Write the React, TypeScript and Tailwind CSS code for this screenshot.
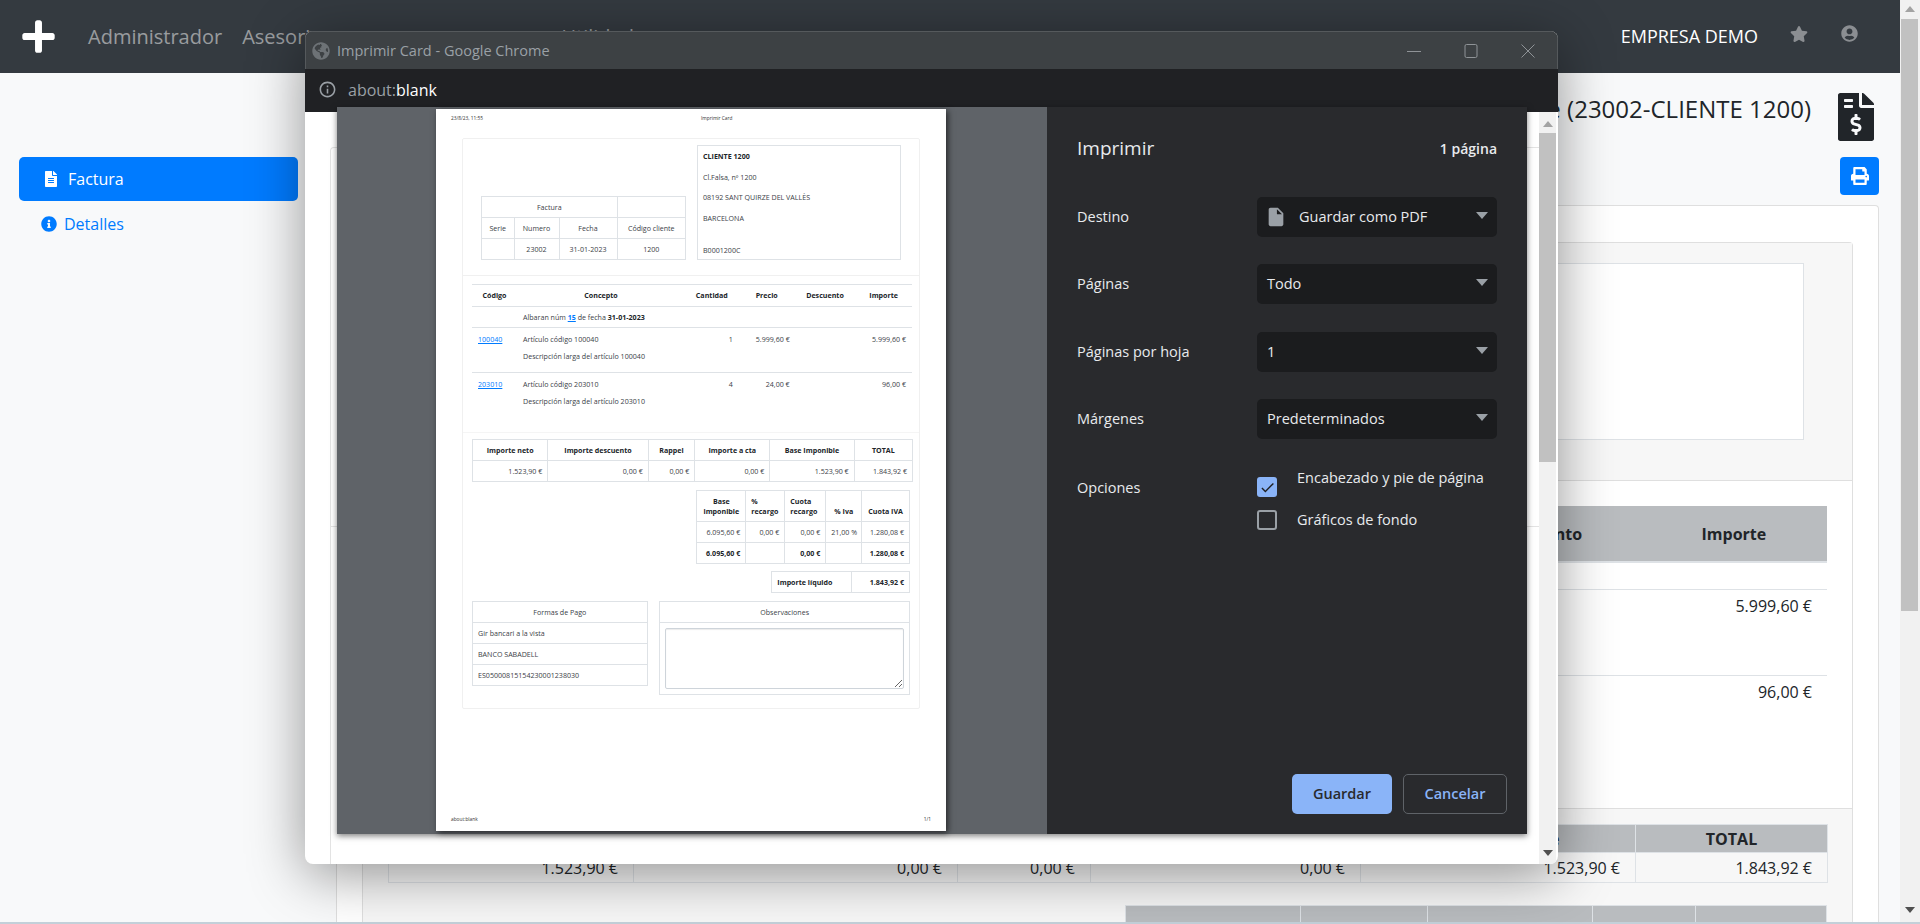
import React from 'react';
import {
  FaPlus,
  FaStar,
  FaUserCircle,
  FaFileAlt,
  FaInfoCircle,
  FaFileInvoiceDollar,
  FaPrint,
  FaGlobeAmericas,
} from 'react-icons/fa';
import { MdInfoOutline, MdInsertDriveFile, MdCheck } from 'react-icons/md';

const Caret = () => (
  <span className="ml-auto mr-[9px] mb-[3px] h-0 w-0 border-x-[6.5px] border-t-[7px] border-x-transparent border-t-[#9aa0a6]" />
);

const Field = ({ label, value, icon }: { label: string; value: string; icon?: boolean }) => (
  <div className="flex h-10 items-center">
    <div className="w-[180px] text-[14.5px] text-[#e8eaed]">{label}</div>
    <div className="flex h-10 w-[240px] items-center rounded-[5px] bg-[#1b1c1e] pl-[10px] text-[14.5px] text-[#e8eaed]">
      {icon && <MdInsertDriveFile size={22} className="-ml-[2px] mr-[12px] text-[#9aa0a6]" />}
      {value}
      <Caret />
    </div>
  </div>
);

const cell = 'border border-[#dee2e6] px-[5px] align-middle';

const InvoicePaper = () => (
  <div className="flex h-[722px] w-[510px] shrink-0 flex-col bg-white pt-[5px] text-[7.1px] text-[#3b4147] shadow-[2px_2px_6px_rgba(0,0,0,0.6)]">
    <div className="flex h-[10px] items-center pl-[15px] text-[4.8px] text-[#333]">
      <span className="w-[250px]">23/8/23, 11:55</span>
      <span>Imprimir Card</span>
    </div>

    <div className="mx-[26px] mt-[14px] rounded-[2px] border border-[#f0f0f0]">
      <div className="flex h-[137px] items-end justify-between border-b border-[#f0f0f0] px-[18px] pb-[15px]">
        <table className="w-[204px] table-fixed border-collapse text-center">
          <colgroup>
            <col className="w-[32.5px]" />
            <col className="w-[45px]" />
            <col className="w-[58px]" />
            <col className="w-[68.5px]" />
          </colgroup>
          <tbody>
            <tr className="h-[21px]">
              <td colSpan={3} className={cell}>Factura</td>
              <td className={cell}></td>
            </tr>
            <tr className="h-[21px]">
              <td className={cell}>Serie</td>
              <td className={cell}>Numero</td>
              <td className={cell}>Fecha</td>
              <td className={cell}>Código cliente</td>
            </tr>
            <tr className="h-[21px]">
              <td className={cell}></td>
              <td className={cell}>23002</td>
              <td className={cell}>31-01-2023</td>
              <td className={cell}>1200</td>
            </tr>
          </tbody>
        </table>
        <div className="h-[115px] w-[204px] border border-[#dee2e6] px-[5px] leading-[20.5px]">
          <div className="font-bold text-[#212529]">CLIENTE 1200</div>
          <div>Cl.Falsa, nº 1200</div>
          <div>08192 SANT QUIRZE DEL VALLÈS</div>
          <div>BARCELONA</div>
          <div className="mt-[12px]">B0001200C</div>
        </div>
      </div>

      <div className="h-[157px] border-b border-[#f5f5f5] px-[9px] pt-[8px]">
        <table className="w-[440px] table-fixed border-collapse">
          <colgroup>
            <col className="w-[45px]" />
            <col className="w-[168px]" />
            <col className="w-[53.7px]" />
            <col className="w-[56px]" />
            <col className="w-[60.6px]" />
            <col className="w-[56.7px]" />
          </colgroup>
          <thead>
            <tr className="h-[22px] border-y border-[#dee2e6] text-center font-bold text-[#212529]">
              <th>Código</th>
              <th>Concepto</th>
              <th>Cantidad</th>
              <th>Precio</th>
              <th>Descuento</th>
              <th>Importe</th>
            </tr>
          </thead>
          <tbody>
            <tr className="h-[21px] border-b border-[#dee2e6]">
              <td></td>
              <td colSpan={5} className="px-[6px]">
                Albaran núm <a href="#" className="font-bold text-[#007bff] underline">15</a> de fecha{' '}
                <b className="text-[#212529]">31-01-2023</b>
              </td>
            </tr>
            <tr className="h-[45px] border-b border-[#dee2e6] align-top">
              <td className="px-[6px] pt-[6px]"><a href="#" className="text-[#007bff] underline">100040</a></td>
              <td className="px-[6px] pt-[6px] leading-[17px]">
                <div className="-mt-[3px]">Artículo código 100040</div>
                <div>Descripción larga del artículo 100040</div>
              </td>
              <td className="px-[6px] pt-[6px] text-right">1</td>
              <td className="px-[5px] pt-[6px] text-right">5.999,60 €</td>
              <td></td>
              <td className="px-[6px] pt-[6px] text-right">5.999,60 €</td>
            </tr>
            <tr className="h-[45px] align-top">
              <td className="px-[6px] pt-[6px]"><a href="#" className="text-[#007bff] underline">203010</a></td>
              <td className="px-[6px] pt-[6px] leading-[17px]">
                <div className="-mt-[3px]">Artículo código 203010</div>
                <div>Descripción larga del artículo 203010</div>
              </td>
              <td className="px-[6px] pt-[6px] text-right">4</td>
              <td className="px-[5px] pt-[6px] text-right">24,00 €</td>
              <td></td>
              <td className="px-[6px] pt-[6px] text-right">96,00 €</td>
            </tr>
          </tbody>
        </table>
      </div>

      <div className="px-[9px] pb-[13px] pt-[6px]">
        <table className="w-[440px] table-fixed border-collapse">
          <colgroup>
            <col className="w-[75.3px]" />
            <col className="w-[100.4px]" />
            <col className="w-[46.6px]" />
            <col className="w-[75px]" />
            <col className="w-[84.4px]" />
            <col className="w-[58.3px]" />
          </colgroup>
          <tbody>
            <tr className="h-[21px] text-center font-bold text-[#212529]">
              <td className={cell}>Importe neto</td>
              <td className={cell}>Importe descuento</td>
              <td className={cell}>Rappel</td>
              <td className={cell}>Importe a cta</td>
              <td className={cell}>Base Imponible</td>
              <td className={cell}>TOTAL</td>
            </tr>
            <tr className="h-[21px] text-right">
              <td className={cell}>1.523,90 €</td>
              <td className={cell}>0,00 €</td>
              <td className={cell}>0,00 €</td>
              <td className={cell}>0,00 €</td>
              <td className={cell}>1.523,90 €</td>
              <td className={cell}>1.843,92 €</td>
            </tr>
          </tbody>
        </table>

        <table className="ml-auto mt-[8px] w-[212.7px] table-fixed border-collapse">
          <colgroup>
            <col className="w-[49px]" />
            <col className="w-[39px]" />
            <col className="w-[41px]" />
            <col className="w-[36px]" />
            <col className="w-[47.7px]" />
          </colgroup>
          <tbody>
            <tr className="h-[31px] font-bold leading-[10px] text-[#212529]">
              <td className={`${cell} text-center`}>Base imponible</td>
              <td className={cell}>% recargo</td>
              <td className={cell}>Cuota recargo</td>
              <td className={`${cell} pt-[10px] text-center`}>% Iva</td>
              <td className={`${cell} whitespace-nowrap px-[2px] pt-[10px] text-center`}>Cuota IVA</td>
            </tr>
            <tr className="h-[21px] text-right">
              <td className={cell}>6.095,60 €</td>
              <td className={cell}>0,00 €</td>
              <td className={cell}>0,00 €</td>
              <td className={`${cell} whitespace-nowrap`}>21,00 %</td>
              <td className={cell}>1.280,08 €</td>
            </tr>
            <tr className="h-[21px] text-right font-bold text-[#212529]">
              <td className={cell}>6.095,60 €</td>
              <td className={cell}></td>
              <td className={cell}>0,00 €</td>
              <td className={cell}></td>
              <td className={cell}>1.280,08 €</td>
            </tr>
          </tbody>
        </table>

        <table className="ml-auto mt-[7px] w-[137.7px] table-fixed border-collapse font-bold text-[#212529]">
          <colgroup>
            <col className="w-[80px]" />
            <col className="w-[57.7px]" />
          </colgroup>
          <tbody>
            <tr className="h-[21px]">
              <td className={cell}>Importe líquido</td>
              <td className={`${cell} text-right`}>1.843,92 €</td>
            </tr>
          </tbody>
        </table>

        <div className="mt-[8px] flex items-start justify-between">
          <table className="w-[175.7px] border-collapse">
            <tbody>
              <tr className="h-[21px]"><td className={`${cell} text-center`}>Formas de Pago</td></tr>
              <tr className="h-[21px]"><td className={cell}>Gir bancari a la vista</td></tr>
              <tr className="h-[21px]"><td className={cell}>BANCO SABADELL</td></tr>
              <tr className="h-[21px]"><td className={cell}>ES0500081515423000123803​0</td></tr>
            </tbody>
          </table>
          <table className="w-[250.7px] border-collapse">
            <tbody>
              <tr className="h-[21px]"><td className={`${cell} text-center`}>Observaciones</td></tr>
              <tr className="h-[72px]">
                <td className={cell}>
                  <textarea
                    readOnly
                    className="block h-[61px] w-full rounded-[2px] border border-[#ced4da] shadow-[inset_0_1px_1px_rgba(0,0,0,0.08)]"
                  />
                </td>
              </tr>
            </tbody>
          </table>
        </div>
      </div>
    </div>

    <div className="mt-auto flex h-[10px] items-center justify-between px-[15px] mb-[6px] text-[4.8px] text-[#333]">
      <span>about:blank</span>
      <span>1/1</span>
    </div>
  </div>
);

const PrintPanel = () => (
  <div className="flex w-[480px] flex-col bg-[#292a2d] px-[30px] pb-[20px] pt-[28px]">
    <div className="flex h-[26px] items-center justify-between text-[#e8eaed]">
      <span className="text-[19px]">Imprimir</span>
      <span className="text-[14px] font-semibold">1 página</span>
    </div>
    <div className="mt-[36px]"><Field label="Destino" value="Guardar como PDF" icon /></div>
    <div className="mt-[27px]"><Field label="Páginas" value="Todo" /></div>
    <div className="mt-[28px]"><Field label="Páginas por hoja" value="1" /></div>
    <div className="mt-[27px]"><Field label="Márgenes" value="Predeterminados" /></div>

    <div className="mt-[28px] flex text-[14.5px] leading-[22px] text-[#e8eaed]">
      <div className="w-[180px] pt-[10px]">Opciones</div>
      <div className="w-[240px]">
        <div className="flex">
          <span className="mt-[10px] flex h-5 w-5 shrink-0 items-center justify-center rounded-[3px] bg-[#8ab4f8]">
            <MdCheck size={17} className="text-[#202124]" />
          </span>
          <span className="ml-5">Encabezado y pie de página</span>
        </div>
        <div className="mt-[12px] flex items-center">
          <span className="h-5 w-5 shrink-0 rounded-[3px] border-2 border-[#9aa0a6]" />
          <span className="ml-5">Gráficos de fondo</span>
        </div>
      </div>
    </div>

    <div className="-mr-[10px] mt-auto flex justify-end gap-[11px] text-[14.5px] font-semibold">
      <button className="h-10 w-[100px] rounded-[5px] bg-[#8ab4f8] text-[#292a2d]">Guardar</button>
      <button className="h-10 w-[104px] rounded-[5px] border border-[#5f6368] text-[#8ab4f8]">Cancelar</button>
    </div>
  </div>
);

const ChromeWindow = () => (
  <div className="absolute left-[305px] top-[31px] flex h-[833px] w-[1253px] flex-col overflow-hidden rounded-lg bg-white shadow-[0_10px_56px_rgba(0,0,0,0.42)]">
    <div className="flex h-[38px] shrink-0 items-center border-x border-t border-[#55595c] bg-[#3d4144] pl-[6px] text-[#9aa0a6]">
      <FaGlobeAmericas size={18} className="text-[#6d7276]" />
      <span className="ml-[7px] text-[14.5px]">Imprimir Card - Google Chrome</span>
      <div className="ml-auto flex items-center">
        <svg width="14" height="14" viewBox="0 0 14 14" className="mr-[43px]" fill="none" stroke="#8f9397">
          <path d="M0 7.5h14" />
        </svg>
        <svg width="14" height="14" viewBox="0 0 14 14" className="mr-[43px]" fill="none" stroke="#8f9397">
          <rect x="1" y="0.5" width="12" height="13" rx="1.5" />
        </svg>
        <svg width="14" height="14" viewBox="0 0 14 14" className="mr-[22px]" fill="none" stroke="#8f9397">
          <path d="M0.5 0.5l13 13M13.5 0.5l-13 13" />
        </svg>
      </div>
    </div>
    <div className="flex h-[43px] shrink-0 items-center bg-[#202124] pl-[13px] pb-[2px] text-[16px]">
      <MdInfoOutline size={19} className="text-[#9aa0a6]" />
      <span className="ml-[11px] text-[#9aa0a6]">about:</span>
      <span className="text-white">blank</span>
    </div>

    <div className="relative flex min-h-0 flex-1">
      <div className="flex-1 pl-[25px] pt-[35px]">
        <div className="h-full rounded-tl-[4px] border-l border-t border-[#e3e3e3]">
          <div className="h-[379px] border-b border-[#e3e3e3]" />
        </div>
      </div>
      <div className="mr-[2px] flex w-[17px] flex-col items-center bg-[#f1f1f1]">
        <span className="mt-[9px] h-0 w-0 border-x-[5px] border-b-[6px] border-x-transparent border-b-[#a3a3a3]" />
        <div className="mt-[6px] h-[329px] w-full bg-[#c1c1c1]" />
        <span className="mb-[8px] mt-auto h-0 w-0 border-x-[5px] border-t-[6px] border-x-transparent border-t-[#505050]" />
      </div>

      <div className="absolute -top-[5px] left-[32px] flex h-[727px] w-[1190px] shadow-[0_2px_6px_rgba(0,0,0,0.5)]">
        <div className="w-[710px] bg-[#5f6368] pl-[99px] pt-[2px]">
          <InvoicePaper />
        </div>
        <PrintPanel />
      </div>
    </div>
  </div>
);

const PageBehind = () => (
  <div className="flex min-w-0 flex-1 flex-col bg-[#f8f9fa]">
    <nav className="flex h-[73px] shrink-0 items-center bg-[#343a40] pl-[20px] text-[20px] text-white/50">
      <FaPlus size={37} className="text-white" />
      <span className="ml-[31px]">Administrador</span>
      <span className="ml-[20px]">Asesoria</span>
      <span className="ml-[240px]">Utilidades</span>
      <span className="ml-auto text-[18px] text-white">EMPRESA DEMO</span>
      <FaStar size={18} className="ml-[32px] mb-[6px] text-[#8b8e92]" />
      <FaUserCircle size={17} className="ml-[33px] mb-[6px] mr-[42px] text-[#8b8e92]" />
    </nav>

    <div className="flex min-h-0 flex-1">
      <aside className="w-[336px] shrink-0 pl-[19px] pr-[38px] pt-[84px] text-[16px]">
        <a href="#" className="flex h-[44px] items-center rounded-[5px] bg-[#007bff] pl-[24px] text-white">
          <FaFileAlt size={16} />
          <span className="ml-[9px]">Factura</span>
        </a>
        <a href="#" className="mt-[1px] flex h-[44px] items-center pl-[22px] text-[#007bff]">
          <FaInfoCircle size={16} />
          <span className="ml-[7px]">Detalles</span>
        </a>
      </aside>

      <main className="flex min-w-0 flex-1 flex-col pr-[21px] text-[#212529]">
        <div className="flex shrink-0 items-start justify-end pt-[20px]">
          <h2 className="mt-[1px] text-[24px] leading-[30px]">Factura de cliente (23002-CLIENTE 1200)</h2>
          <FaFileInvoiceDollar size={48} className="ml-[21px] -mr-[1px] text-[#212529]" />
        </div>
        <div className="mb-[10px] mt-[16px] flex shrink-0 justify-end">
          <button className="flex h-[38px] w-[39px] items-center justify-center rounded-[4px] bg-[#007bff] text-white">
            <FaPrint size={18} />
          </button>
        </div>

        <div className="min-h-0 flex-1 overflow-hidden rounded-t-[4px] border border-b-0 border-[#dfdfdf] bg-white px-[25px] pt-[36px]">
          <div className="rounded-t-[4px] border border-b-0 border-[#dfdfdf]">
            <div className="h-[238px] border-b border-[#dfdfdf] bg-[#f7f7f7] pl-[50px] pr-[48px] pt-[20px]">
              <div className="h-[177px] border border-[#dee2e6] bg-white" />
            </div>
            <div className="h-[327px] px-[25px] pt-[25px]">
              <table className="w-full table-fixed border-collapse text-[16px]">
                <colgroup>
                  <col className="w-[130px]" />
                  <col className="w-[620px]" />
                  <col className="w-[150px]" />
                  <col className="w-[150px]" />
                  <col className="w-[202px]" />
                  <col className="w-[186px]" />
                </colgroup>
                <thead>
                  <tr className="h-[56px] border-b-2 border-[#dee2e6] bg-[#b9bcbf] text-center font-bold">
                    <th>Código</th>
                    <th>Concepto</th>
                    <th>Cantidad</th>
                    <th>Precio</th>
                    <th>Descuento</th>
                    <th>Importe</th>
                  </tr>
                </thead>
                <tbody>
                  <tr className="h-[27px] border-b border-[#dee2e6]"><td colSpan={6}></td></tr>
                  <tr className="h-[86px] border-b border-[#dee2e6] align-top">
                    <td colSpan={5}></td>
                    <td className="px-[15px] pt-[4px] text-right">5.999,60 €</td>
                  </tr>
                  <tr className="align-top">
                    <td colSpan={5}></td>
                    <td className="px-[15px] pt-[4px] text-right">96,00 €</td>
                  </tr>
                </tbody>
              </table>
            </div>
            <div className="h-[200px] border-t border-[#dfdfdf] bg-[#f7f7f7] px-[25px] pt-[15px] text-[16px]">
              <table className="w-full table-fixed border-collapse">
                <colgroup>
                  <col className="w-[245px]" />
                  <col className="w-[324px]" />
                  <col className="w-[133px]" />
                  <col className="w-[270px]" />
                  <col className="w-[275px]" />
                  <col className="w-[192px]" />
                </colgroup>
                <tbody>
                  <tr className="h-[28px] bg-[#b9bcbf] text-center font-bold">
                    <td className="border border-[#dee2e6]">Importe neto</td>
                    <td className="border border-[#dee2e6]">Importe descuento</td>
                    <td className="border border-[#dee2e6]">Rappel</td>
                    <td className="border border-[#dee2e6]">Importe a cta</td>
                    <td className="border border-[#dee2e6]">Base Imponible</td>
                    <td className="border border-[#dee2e6]">TOTAL</td>
                  </tr>
                  <tr className="h-[30px] text-right">
                    <td className="border border-[#dee2e6] px-[15px]">1.523,90 €</td>
                    <td className="border border-[#dee2e6] px-[15px]">0,00 €</td>
                    <td className="border border-[#dee2e6] px-[15px]">0,00 €</td>
                    <td className="border border-[#dee2e6] px-[15px]">0,00 €</td>
                    <td className="border border-[#dee2e6] px-[15px]">1.523,90 €</td>
                    <td className="border border-[#dee2e6] px-[15px]">1.843,92 €</td>
                  </tr>
                </tbody>
              </table>
              <table className="ml-auto mt-[22px] w-[701px] table-fixed border-collapse">
                <colgroup>
                  <col className="w-[175px]" />
                  <col className="w-[127px]" />
                  <col className="w-[165px]" />
                  <col className="w-[103px]" />
                  <col className="w-[131px]" />
                </colgroup>
                <tbody>
                  <tr className="h-[40px] bg-[#b9bcbf]">
                    <td className="border border-[#dee2e6]"></td>
                    <td className="border border-[#dee2e6]"></td>
                    <td className="border border-[#dee2e6]"></td>
                    <td className="border border-[#dee2e6]"></td>
                    <td className="border border-[#dee2e6]"></td>
                  </tr>
                </tbody>
              </table>
            </div>
          </div>
        </div>
      </main>
    </div>
  </div>
);

const PageScrollbar = () => (
  <div className="flex w-[20px] shrink-0 flex-col items-center bg-[#f1f1f1] pr-[1px]">
    <span className="mt-[6px] h-0 w-0 border-x-[5px] border-b-[6px] border-x-transparent border-b-[#a3a3a3]" />
    <div className="mt-[7px] h-[592px] w-[17px] bg-[#c1c1c1]" />
    <span className="mb-[9px] mt-auto h-0 w-0 border-x-[5px] border-t-[6px] border-x-transparent border-t-[#505050]" />
  </div>
);

export default function App() {
  return (
    <div className="relative flex h-screen w-full flex-col overflow-hidden font-['Open_Sans','Noto_Sans',sans-serif]">
      <div className="flex min-h-0 flex-1">
        <PageBehind />
        <PageScrollbar />
      </div>
      <div className="h-[2px] shrink-0 bg-[#c3d0d9]" />
      <ChromeWindow />
    </div>
  );
}
